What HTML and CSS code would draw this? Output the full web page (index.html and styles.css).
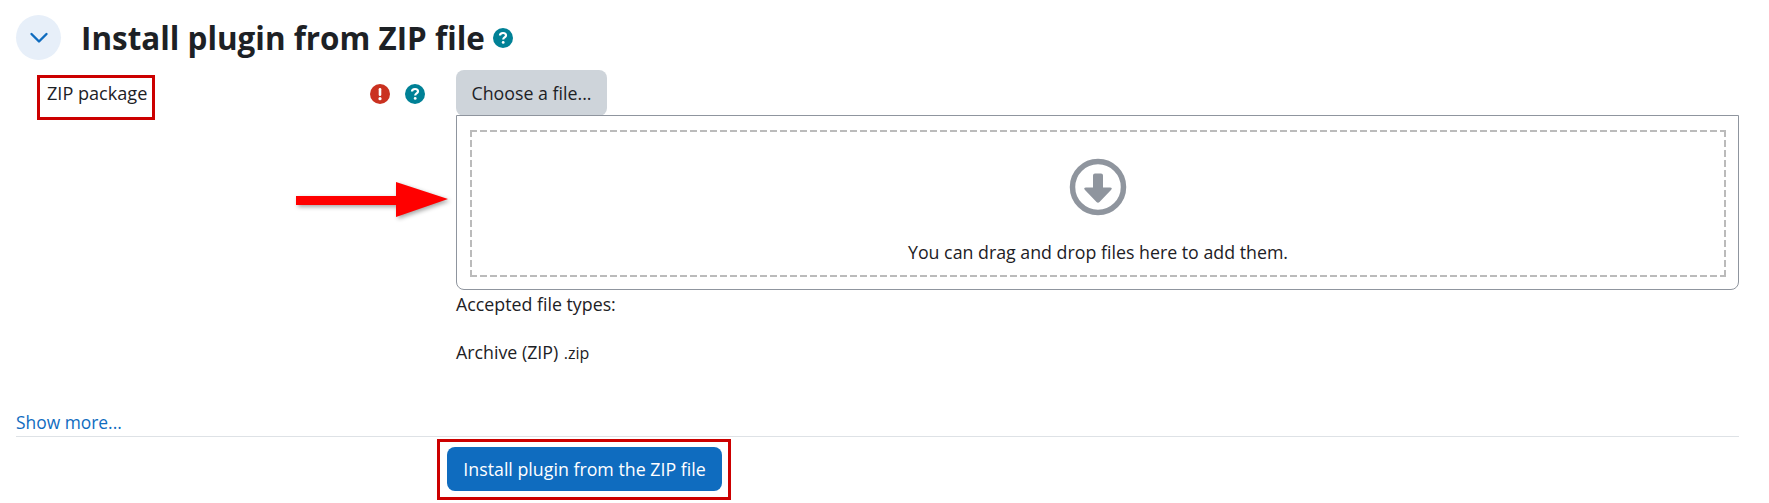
FILE: index.html
```html
<!DOCTYPE html>
<html lang="en">
<head>
    <meta charset="UTF-8">
    <title>Install plugin from ZIP file</title>
    <link rel="stylesheet" href="styles.css">
</head>
<body>
    <div class="page">
        <div class="head">
            <span class="toggle">
                <svg width="20" height="12" viewBox="0 0 20 12"><path d="M2.5 2 L10 9.5 L17.5 2" fill="none" stroke="#0f6cbf" stroke-width="2.4" stroke-linecap="round" stroke-linejoin="round"/></svg>
            </span>
            <h2 class="title">Install plugin from ZIP file</h2>
            <svg class="help_big" width="20" height="20" viewBox="0 0 20 20"><circle cx="10" cy="10" r="10" fill="#008196"/><path d="M7 7.6 C7 5.8 8.4 5 10 5 C11.7 5 13 6 13 7.5 C13 9.4 10.2 9.5 10.2 11.4" fill="none" stroke="#fff" stroke-width="2.2"/><circle cx="10.2" cy="14.4" r="1.4" fill="#fff"/></svg>
        </div>

        <div class="row">
            <div class="label_col">
                <span class="label_box">ZIP package</span>
                <span class="label_icons">
                    <svg width="20" height="20" viewBox="0 0 20 20"><circle cx="10" cy="10" r="10" fill="#ca3120"/><rect x="8.7" y="4" width="2.6" height="8" rx="1.2" fill="#fff"/><circle cx="10" cy="14.7" r="1.6" fill="#fff"/></svg>
                    <svg width="20" height="20" viewBox="0 0 20 20"><circle cx="10" cy="10" r="10" fill="#008196"/><path d="M7 7.6 C7 5.8 8.4 5 10 5 C11.7 5 13 6 13 7.5 C13 9.4 10.2 9.5 10.2 11.4" fill="none" stroke="#fff" stroke-width="2.2"/><circle cx="10.2" cy="14.4" r="1.4" fill="#fff"/></svg>
                </span>
            </div>
            <div class="field_col">
                <button class="btn_choose">Choose a file...</button>
                <div class="file_box">
                    <div class="drop_area">
                        <svg class="drop_icon" width="58" height="58" viewBox="0 0 58 58">
                            <circle cx="29" cy="29" r="25.5" fill="none" stroke="#8f959e" stroke-width="5.5"/>
                            <path d="M24 17.5 Q24 15.5 26 15.5 H32 Q34 15.5 34 17.5 V29.5 H41 Q44 29.5 42 32 L30.5 44 Q29 45.5 27.5 44 L16 32 Q14 29.5 17 29.5 H24 Z" fill="#8f959e"/>
                        </svg>
                        <div class="drop_text">You can drag and drop files here to add them.</div>
                    </div>
                </div>
                <p class="types_title">Accepted file types:</p>
                <p class="types_item">Archive (ZIP) <small>.zip</small></p>
            </div>
        </div>

        <a class="show_more" href="#">Show more...</a>
        <div class="foot">
            <span class="submit_box"><button class="btn_submit">Install plugin from the ZIP file</button></span>
        </div>
    </div>

    <svg class="arrow" width="160" height="40" viewBox="0 0 160 40">
        <path d="M1 15 H101 V1 L153 18 L101 36 V24 H1 Z" fill="#f00"/>
    </svg>
</body>
</html>
```

FILE: styles.css
```css
* {
    box-sizing: border-box;
}
html, body {
    margin: 0;
    background: #fff;
}
body {
    position: relative;
    height: 503px;
    overflow: hidden;
    font-family: "Open Sans", "Noto Sans", sans-serif;
    font-size: 17.8px;
    color: #1d2125;
}
.page {
    width: 1769px;
    padding: 15px 0 0 16px;
}

.head {
    display: flex;
    align-items: center;
    height: 45px;
}
.toggle {
    display: flex;
    align-items: center;
    justify-content: center;
    width: 45px;
    height: 45px;
    border-radius: 50%;
    background: #e7eff9;
}
.title {
    margin: 0 0 0 20px;
    font-size: 31.4px;
    font-weight: 700;
    line-height: 45px;
    white-space: nowrap;
}
.help_big {
    margin-left: 8px;
}

.row {
    display: flex;
    margin-top: 10px;
}
.label_col {
    display: flex;
    justify-content: space-between;
    align-items: flex-start;
    width: 440px;
    padding: 5px 80px 0 21px;
}
.label_box {
    width: 118px;
    height: 45px;
    padding: 3px 0 0 7px;
    border: 3px solid #c00;
    font-size: 18.1px;
    line-height: 24px;
    white-space: nowrap;
}
.label_icons {
    display: flex;
    gap: 15px;
    margin-top: 9px;
    margin-right: -49px;
}
.field_col {
    width: 1283px;
}
.btn_choose {
    display: block;
    width: 151px;
    height: 46px;
    margin-bottom: -1px;
    border: 0;
    border-radius: 8px;
    background: #ced4da;
    color: #1d2125;
    font: inherit;
}
.file_box {
    height: 175px;
    padding: 14px 12px 12px 13px;
    border: 1px solid #8f959e;
    border-radius: 0 0 8px 8px;
    background: #fff;
    position: relative;
}
.drop_area {
    display: flex;
    flex-direction: column;
    align-items: center;
    height: 147px;
    padding-top: 28px;
    /* the dashes are longer than a 2px dashed border gives */
    background:
        repeating-linear-gradient(90deg, #bbb 0 7px, transparent 7px 10px) top / 100% 2px no-repeat,
        repeating-linear-gradient(90deg, #bbb 0 7px, transparent 7px 10px) bottom / 100% 2px no-repeat,
        repeating-linear-gradient(180deg, #bbb 0 7px, transparent 7px 10px) left / 2px 100% no-repeat,
        repeating-linear-gradient(180deg, #bbb 0 7px, transparent 7px 10px) right / 2px 100% no-repeat;
}
.drop_icon {
    display: block;
}
.drop_text {
    margin-top: 24px;
    line-height: 24px;
}
.types_title {
    margin: 2px 0 0;
    line-height: 24px;
}
.types_item {
    margin: 24px 0 0;
    line-height: 24px;
}
.types_item small {
    margin-left: 1px;
    font-size: 16px;
}

.show_more {
    display: block;
    margin-top: 45px;
    color: #0f6cbf;
    font-size: 17.4px;
    text-decoration: none;
    line-height: 24px;
}
.foot {
    margin-top: 2px;
    width: 1723px;
    padding: 2px 0 0 421px;
    border-top: 1px solid #dee2e6;
}
.submit_box {
    display: inline-block;
    padding: 5px 6px 6px 7px;
    border: 3px solid #c00;
}
.btn_submit {
    display: block;
    width: 275px;
    height: 44px;
    border: 0;
    border-radius: 8px;
    background: #0f6cbf;
    color: #fff;
    font: inherit;
}

.arrow {
    position: absolute;
    left: 295px;
    top: 181px;
    filter: drop-shadow(2px 2px 2px rgba(0, 0, 0, 0.35));
}
```
